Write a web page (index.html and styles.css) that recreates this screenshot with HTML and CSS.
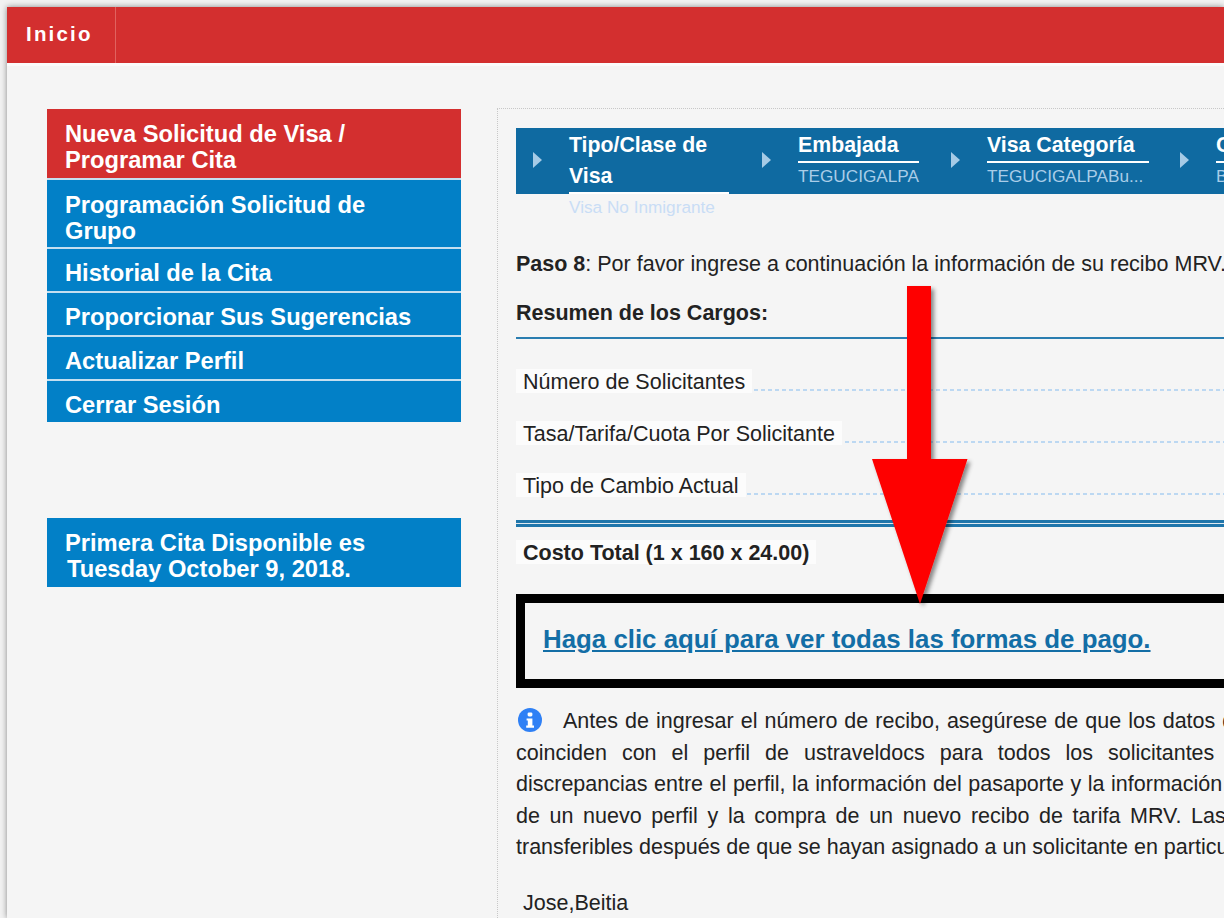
FILE: index.html
```html
<!DOCTYPE html>
<html lang="es">
<head>
<meta charset="utf-8">
<title>Paso 8</title>
<link rel="stylesheet" href="styles.css">
</head>
<body>
<div class="page">
  <header class="topbar"><a class="home">Inicio</a></header>
  <div class="columns">
    <aside class="sidebar">
      <nav class="nav">
        <a class="nav-item two active">Nueva Solicitud de Visa /<br>Programar Cita</a>
        <a class="nav-item two group">Programación Solicitud de<br>Grupo</a>
        <a class="nav-item">Historial de la Cita</a>
        <a class="nav-item">Proporcionar Sus Sugerencias</a>
        <a class="nav-item">Actualizar Perfil</a>
        <a class="nav-item last">Cerrar Sesión</a>
      </nav>
      <div class="nav-item notice">Primera Cita Disponible es<br><span class="notice-date">Tuesday October 9, 2018.</span></div>
    </aside>
    <main class="content">
      <div class="steps">
        <span class="tri"></span>
        <div class="step step-1"><div class="step-title">Tipo/Clase de Visa</div><div class="step-sub pale">Visa No Inmigrante</div></div>
        <span class="tri"></span>
        <div class="step step-2"><div class="step-title">Embajada</div><div class="step-sub">TEGUCIGALPA</div></div>
        <span class="tri"></span>
        <div class="step step-3"><div class="step-title">Visa Categoría</div><div class="step-sub">TEGUCIGALPABu...</div></div>
        <span class="tri"></span>
        <div class="step step-4"><div class="step-title">Categoría</div><div class="step-sub">B1/B2</div></div>
      </div>
      <p class="intro"><b>Paso 8</b>: Por favor ingrese a continuación la información de su recibo MRV.</p>
      <h2 class="summary-title">Resumen de los Cargos:</h2>
      <div class="rule"></div>
      <div class="row"><span class="label">Número de Solicitantes</span></div>
      <div class="row"><span class="label">Tasa/Tarifa/Cuota Por Solicitante</span></div>
      <div class="row"><span class="label">Tipo de Cambio Actual</span></div>
      <div class="double-rule"></div>
      <div class="total"><span class="label strong">Costo Total (1 x 160 x 24.00)</span></div>
      <div class="pay-box"><a class="pay-link">Haga clic aquí para ver todas las formas de pago.</a></div>
      <div class="note">
        <span class="line first"><svg class="info" viewBox="0 0 24 24" aria-hidden="true"><circle cx="12" cy="12" r="12" fill="#2f80f5"/><rect x="9.6" y="4.4" width="4.8" height="4" rx="1.4" fill="#fff"/><path d="M8.6 10.400h5.800v7.200h1.600v2.200H8.200v-2.200h1.600v-5H8.600z" fill="#fff"/></svg>Antes de ingresar el número de recibo, asegúrese de que los datos de su</span>
        <span class="line">coinciden con el perfil de ustraveldocs para todos los solicitantes sean</span>
        <span class="line">discrepancias entre el perfil, la información del pasaporte y la información de la</span>
        <span class="line">de un nuevo perfil y la compra de un nuevo recibo de tarifa MRV. Las tasa</span>
        <span class="line">transferibles después de que se hayan asignado a un solicitante en particular. Los</span>
      </div>
      <div class="applicant">Jose,Beitia</div>
    </main>
  </div>
</div>
<svg class="arrow" viewBox="0 0 110 330" aria-hidden="true">
  <defs><filter id="sh" x="-20%" y="-10%" width="150%" height="120%"><feDropShadow dx="3" dy="3" stdDeviation="2" flood-color="#000" flood-opacity=".45"/></filter></defs>
  <path d="M40 2h24v173h36.500L53 320 5 175h35z" fill="#fe0000" filter="url(#sh)"/>
</svg>
</body>
</html>
```
FILE: styles.css
```css
html, body {
  margin: 0;
  padding: 0;
  width: 1224px;
  height: 918px;
  overflow: hidden;
  background: #f2f2f2;
  font-family: "Liberation Sans", Arial, sans-serif;
  color: #222;
}
.page {
  margin: 7px 0 0 7px;
  width: 1217px;
  height: 911px;
  overflow: hidden;
  background: #f5f5f5;
  box-shadow: 0 0 6px rgba(0, 0, 0, .45);
}
.topbar {
  height: 56px;
  background: #d32f2f;
  border-bottom: 3px solid #fbfbfb;
  display: flex;
}
.home {
  width: 89px;
  padding-left: 19px;
  border-right: 1px solid #e0625f;
  color: #fff;
  font-weight: bold;
  font-size: 20.500px;
  letter-spacing: 2.200px;
  line-height: 53px;
}
.columns {
  display: flex;
  padding: 43px 0 0 40px;
  align-items: flex-start;
}
.sidebar {
  width: 414px;
  flex: none;
}
.nav {
  display: flex;
  flex-direction: column;
  gap: 2px;
  background: #c4dff0;
  margin-bottom: 96px;
}
.nav-item {
  display: block;
  background: #0280c7;
  color: #fff;
  font-weight: bold;
  font-size: 23.700px;
  line-height: 26px;
  padding: 11px 0 5px 18px;
}
.nav-item.two { padding: 12px 0 4px 18px; }
.nav-item.active { background: #d32f2f; padding-bottom: 5px; }
.nav-item.group { padding-bottom: 3px; }
.nav-item.last { padding-bottom: 4px; }
.notice { padding: 12px 0 5px 18px; }
.notice-date { margin-left: 2px; }
.content {
  margin-left: 36px;
  width: 1000px;
  flex: none;
  padding: 19px 0 0 18px;
  border-left: 1px dotted #c8c8c8;
  border-top: 1px dotted #c8c8c8;
  margin-top: -1px;
}
.steps {
  height: 66px;
  background: #0f6aa1;
  display: flex;
  align-items: flex-start;
}
.tri {
  flex: none;
  width: 0;
  height: 0;
  margin: 24px 0 0 17px;
  border-left: 9px solid #a6cbe6;
  border-top: 8px solid transparent;
  border-bottom: 8px solid transparent;
}
.step { flex: none; margin-left: 27px; }
.step-title {
  color: #fff;
  font-weight: bold;
  font-size: 21.300px;
  line-height: 31px;
  padding: 2px 0 0;
  border-bottom: 2px solid #fff;
}
.step-sub {
  color: #a9cde8;
  font-size: 17.200px;
  line-height: 27px;
}
.step-sub.pale { color: #c9ddf5; }
.step-1 { width: 160px; margin-right: 16px; }
.step-2 { width: 121px; margin-right: 15px; }
.step-3 { width: 162px; margin-right: 14px; }
.step-4 { width: 160px; }
.intro {
  margin: 55px 0 0;
  font-size: 21.500px;
  line-height: 30px;
  white-space: nowrap;
}
.summary-title {
  margin: 19px 0 0;
  font-size: 21.500px;
  line-height: 30px;
}
.rule {
  margin: 9px 0 30px;
  height: 2px;
  background: #2a7db0;
}
.row {
  height: 24px;
  margin-top: 28px;
  display: flex;
  background-image: repeating-linear-gradient(to right, #bcd8f2 0 4px, transparent 4px 7px);
  background-size: 100% 2px;
  background-position: 0 20px;
  background-repeat: no-repeat;
}
.label {
  background: #fcfcfc;
  padding: 0 7px;
  font-size: 21.500px;
  line-height: 26px;
  height: 24px;
}
.label.strong { font-weight: bold; }
.double-rule {
  margin-top: 23px;
  height: 1px;
  border-top: 3px solid #1f76ab;
  border-bottom: 3px solid #1f76ab;
  background: #dfe9f0;
}
.total { margin-top: 13px; display: flex; }
.pay-box {
  margin-top: 30px;
  height: 76px;
  border: 9px solid #000;
  display: flex;
  align-items: flex-start;
  padding-left: 18px;
}
.pay-link {
  margin-top: 22px;
  color: #136ea6;
  font-weight: bold;
  font-size: 25.850px;
  text-decoration: underline;
}
.note {
  margin-top: 18px;
  width: 760px;
  font-size: 21.500px;
  line-height: 31.500px;
}
.line {
  display: block;
  white-space: nowrap;
  text-align: justify;
  text-align-last: justify;
}
.info {
  width: 24px;
  height: 24px;
  vertical-align: -4px;
  margin: 0 21px 0 2px;
}
.applicant {
  margin-top: 24px;
  padding-left: 7px;
  font-size: 21.500px;
  line-height: 30px;
}
.arrow {
  position: absolute;
  left: 867px;
  top: 284px;
  width: 110px;
  height: 330px;
}
```
